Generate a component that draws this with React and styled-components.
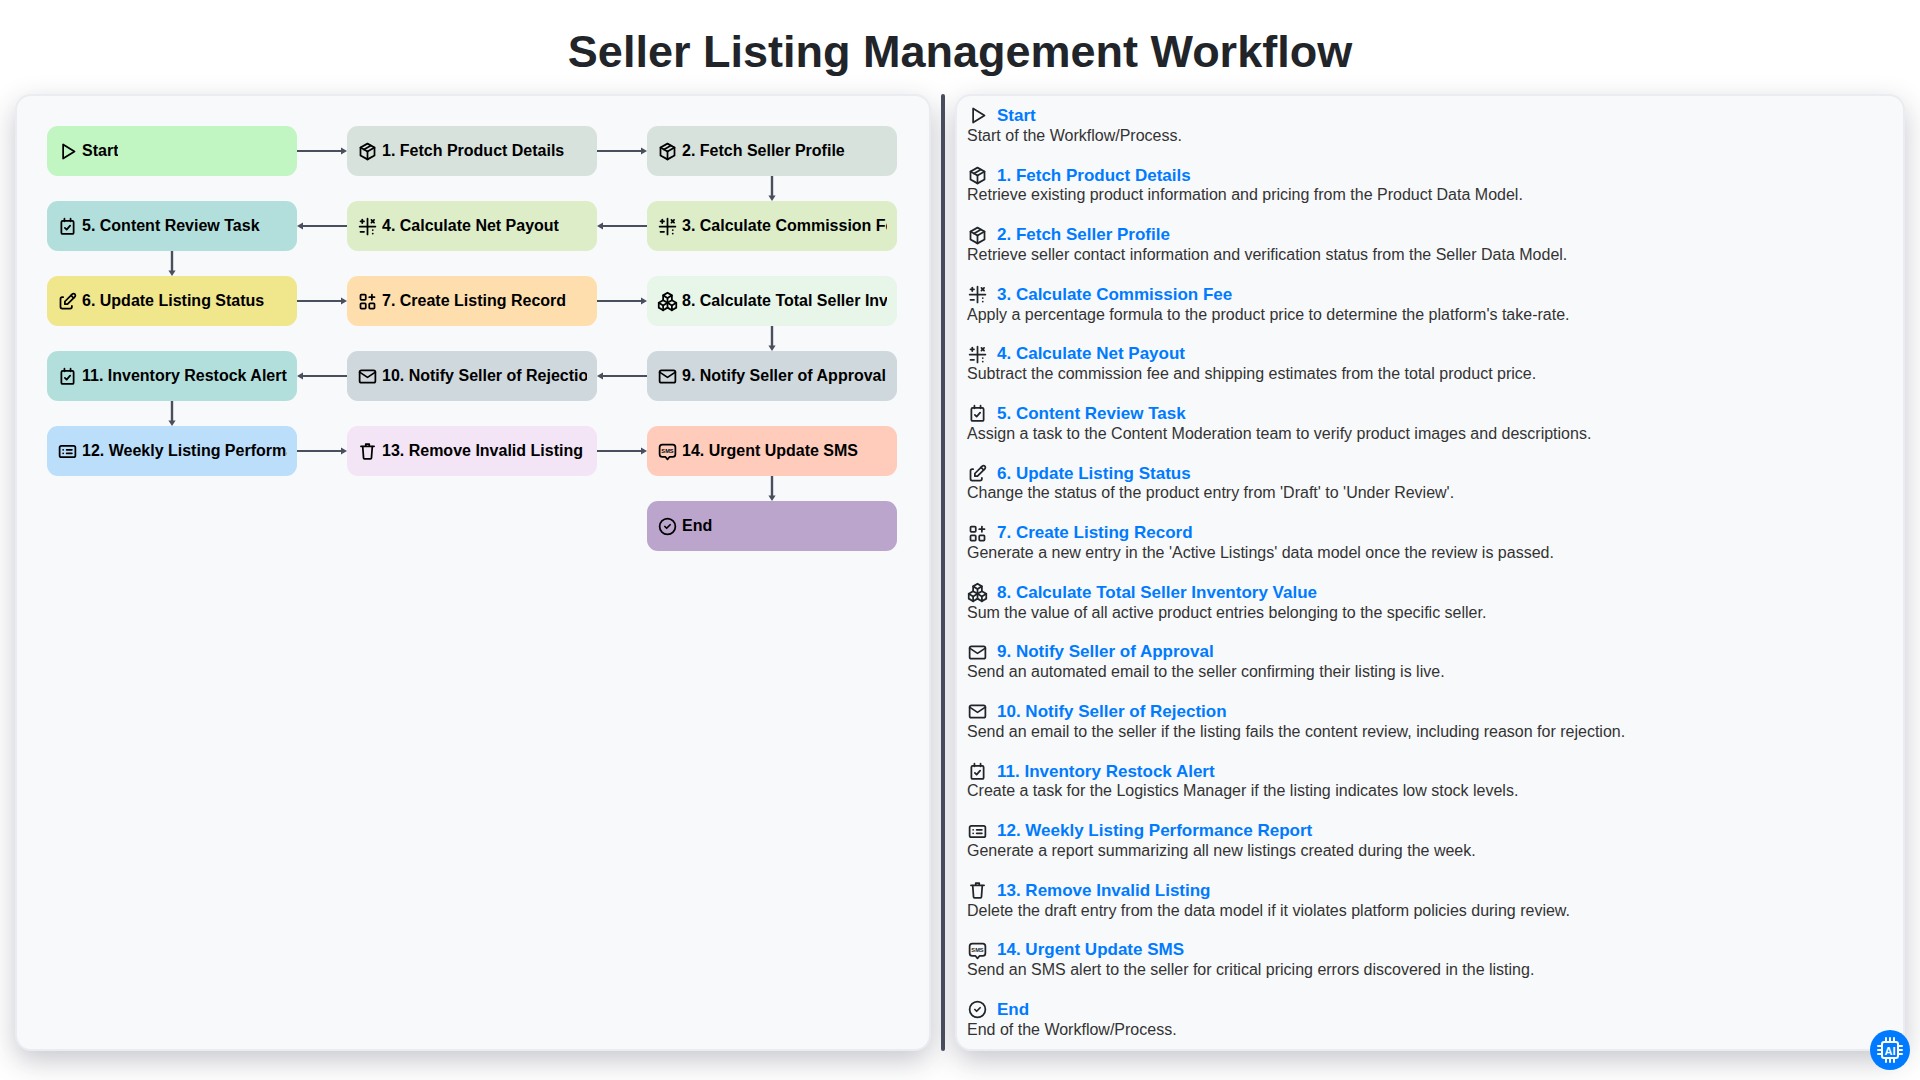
import React from "react";
import styled, { createGlobalStyle } from "styled-components";
import { TbPlayerPlay, TbPackage, TbMathSymbols, TbEdit, TbApps, TbPackages, TbMail, TbCircleCheck } from "react-icons/tb";

const Global = createGlobalStyle`
  html, body { margin: 0; padding: 0; background: #fff; }
  body { font-family: "Liberation Sans", Arial, sans-serif; overflow: hidden; }
`;

const Page = styled.div`
  width: 1920px; height: 1080px; display: flex; flex-direction: column; position: relative;
`;
const Title = styled.h1`
  margin: 0; height: 94px; display: flex; align-items: center; justify-content: center;
  font-size: 45px; font-weight: 700; color: #212529; padding-top: 10px; box-sizing: border-box;
`;
const Columns = styled.div`
  display: flex; height: 957px; padding: 0 15px;
`;
const Panel = styled.section`
  box-sizing: border-box; height: 100%; background: #f8f9fb; border: 2px solid #eaecf1; border-radius: 16px;
  box-shadow: 0 10px 28px rgba(40, 44, 60, 0.26);
`;
const FlowPanel = styled(Panel)`
  flex: 0 0 916px; padding: 30px; display: flex; align-items: flex-start;
`;
const Divider = styled.div`
  flex: 0 0 4px; margin: 0 10px; background: #4a4f60; border-radius: 2px;
`;
const ListPanel = styled(Panel)`
  flex: 1; padding: 9.2px 10px; display: flex; flex-direction: column; gap: 19.6px;
`;
const Grid = styled.div`
  display: grid; grid-template-columns: 250px 50px 250px 50px 250px;
`;
const Node = styled.div`
  box-sizing: border-box; height: 50px; padding: 0 10px 0 9.500px; border-radius: 11px; background: ${p => p.$bg};
  display: flex; align-items: center; gap: 4.500px;
  font-size: 16px; font-weight: 700; color: #000; white-space: nowrap;
  svg { flex: none; width: 21px; height: 21px; }
`;
const NodeLabel = styled.span`
  min-width: 0; overflow: hidden;
`;
const Cell = styled.div`
  height: ${p => (p.$gap ? "25px" : "50px")};
  display: flex; align-items: center; justify-content: center;
`;
const Item = styled.article`
  display: flex; flex-direction: column;
`;
const ItemHead = styled.div`
  display: flex; align-items: center; gap: 9.500px; height: 21.6px; margin-left: -0.5px;
  svg { flex: none; width: 21px; height: 21px; color: #212529; }
`;
const ItemTitle = styled.h3`
  margin: 0; font-size: 17px; font-weight: 700; color: #007bff;
`;
const ItemText = styled.p`
  margin: 0; font-size: 16px; color: #333; line-height: 18.4px;
`;
const AiBadge = styled.button`
  position: absolute; left: 1870px; top: 1030px; width: 40px; height: 40px; border: 0; padding: 0; border-radius: 50%;
  background: #007bff; color: #fff; display: flex; align-items: center; justify-content: center;
`;

const Svg = ({ children }) => (
  <svg viewBox="0 0 24 24" fill="none" stroke="currentColor" strokeWidth="2" strokeLinecap="round" strokeLinejoin="round">{children}</svg>
);
const TaskIcon = () => (
  <Svg><rect x="5" y="5.500" width="14" height="15" rx="1.500" /><path d="M8.500 3v3M15.500 3v3M9 13.500l2 2 4-4.500" /></Svg>
);
const ReportIcon = () => (
  <Svg><rect x="3" y="5.500" width="18" height="13" rx="2" /><path d="M7 10h.01M7 14h.01M11 10h6M11 14h6" /></Svg>
);
const TrashIcon = () => (
  <Svg><path d="M4.500 6h15M6.500 6l1 13.500a1 1 0 0 0 1 1h7a1 1 0 0 0 1-1l1-13.500M10 6V3.500h4V6" /></Svg>
);
const SmsIcon = () => (
  <Svg>
    <path d="M6 4h12a3 3 0 0 1 3 3v8a3 3 0 0 1-3 3h-3.500l-2.500 3-2.500-3H6a3 3 0 0 1-3-3V7a3 3 0 0 1 3-3z" />
    <text x="12" y="13.200" textAnchor="middle" fontSize="6.500" fontWeight="700" fontFamily="Liberation Sans" stroke="none" fill="currentColor">SMS</text>
  </Svg>
);
const AiIcon = () => (
  <svg width="30" height="30" viewBox="0 0 30 30" fill="none" stroke="#fff" strokeWidth="2" strokeLinecap="round">
    <rect x="7" y="7" width="16" height="16" rx="2" />
    <path d="M11 3v3M15 3v3M19 3v3M11 24v3M15 24v3M19 24v3M3 11h3M3 15h3M3 19h3M24 11h3M24 15h3M24 19h3" />
    <text x="15" y="19.500" textAnchor="middle" fontSize="11" fontWeight="700" fontFamily="Liberation Sans" stroke="none" fill="#fff">AI</text>
  </svg>
);

const Arrow = ({ dir }) => {
  if (dir === "down") {
    return (
      <svg width="10" height="25" viewBox="0 0 10 25" fill="#4a4f5e">
        <rect x="3.800" y="0" width="2.400" height="20" /><path d="M5 25 1.400 19.500h7.200z" />
      </svg>
    );
  }
  return (
    <svg width="50" height="10" viewBox="0 0 50 10" fill="#4a4f5e">
      {dir === "right"
        ? <><rect x="0" y="4" width="45" height="2" /><path d="M50 5 44 1.400v7.200z" /></>
        : <><rect x="5" y="4" width="45" height="2" /><path d="M0 5 6 1.400v7.200z" /></>}
    </svg>
  );
};

const steps = {
  start: { t: "Start", d: "Start of the Workflow/Process.", bg: "#c1f5c1", I: TbPlayerPlay },
  s1: { t: "1. Fetch Product Details", d: "Retrieve existing product information and pricing from the Product Data Model.", bg: "#d8e2dc", I: TbPackage },
  s2: { t: "2. Fetch Seller Profile", d: "Retrieve seller contact information and verification status from the Seller Data Model.", bg: "#d8e2dc", I: TbPackage },
  s3: { t: "3. Calculate Commission Fee", d: "Apply a percentage formula to the product price to determine the platform's take-rate.", bg: "#dcedc8", I: TbMathSymbols },
  s4: { t: "4. Calculate Net Payout", d: "Subtract the commission fee and shipping estimates from the total product price.", bg: "#dcedc8", I: TbMathSymbols },
  s5: { t: "5. Content Review Task", d: "Assign a task to the Content Moderation team to verify product images and descriptions.", bg: "#b2dfdb", I: TaskIcon },
  s6: { t: "6. Update Listing Status", d: "Change the status of the product entry from 'Draft' to 'Under Review'.", bg: "#f0e68c", I: TbEdit },
  s7: { t: "7. Create Listing Record", d: "Generate a new entry in the 'Active Listings' data model once the review is passed.", bg: "#ffdead", I: TbApps },
  s8: { t: "8. Calculate Total Seller Inventory Value", d: "Sum the value of all active product entries belonging to the specific seller.", bg: "#e8f5e9", I: TbPackages },
  s9: { t: "9. Notify Seller of Approval", d: "Send an automated email to the seller confirming their listing is live.", bg: "#cfd8dc", I: TbMail },
  s10: { t: "10. Notify Seller of Rejection", d: "Send an email to the seller if the listing fails the content review, including reason for rejection.", bg: "#cfd8dc", I: TbMail },
  s11: { t: "11. Inventory Restock Alert", d: "Create a task for the Logistics Manager if the listing indicates low stock levels.", bg: "#b2dfdb", I: TaskIcon },
  s12: { t: "12. Weekly Listing Performance Report", d: "Generate a report summarizing all new listings created during the week.", bg: "#bbdefb", I: ReportIcon },
  s13: { t: "13. Remove Invalid Listing", d: "Delete the draft entry from the data model if it violates platform policies during review.", bg: "#f3e5f5", I: TrashIcon },
  s14: { t: "14. Urgent Update SMS", d: "Send an SMS alert to the seller for critical pricing errors discovered in the listing.", bg: "#ffccbc", I: SmsIcon },
  end: { t: "End", d: "End of the Workflow/Process.", bg: "#bca5cd", I: TbCircleCheck },
};
const order = ["start", "s1", "s2", "s3", "s4", "s5", "s6", "s7", "s8", "s9", "s10", "s11", "s12", "s13", "s14", "end"];

const layout = [
  ["start", "right", "s1", "right", "s2"],
  [null, null, null, null, "down"],
  ["s5", "left", "s4", "left", "s3"],
  ["down", null, null, null, null],
  ["s6", "right", "s7", "right", "s8"],
  [null, null, null, null, "down"],
  ["s11", "left", "s10", "left", "s9"],
  ["down", null, null, null, null],
  ["s12", "right", "s13", "right", "s14"],
  [null, null, null, null, "down"],
  [null, null, null, null, "end"],
];

export default function App() {
  return (
    <Page>
      <Global />
      <Title>Seller Listing Management Workflow</Title>
      <Columns>
        <FlowPanel>
          <Grid>
            {layout.flatMap((row, r) =>
              row.map((c, i) => {
                const key = `${r}-${i}`;
                const gap = r % 2 === 1;
                if (c && steps[c]) {
                  const { t, bg, I } = steps[c];
                  return <Node key={key} $bg={bg}><I /><NodeLabel>{t}</NodeLabel></Node>;
                }
                return <Cell key={key} $gap={gap}>{c && <Arrow dir={c} />}</Cell>;
              })
            )}
          </Grid>
        </FlowPanel>
        <Divider />
        <ListPanel>
          {order.map(k => {
            const { t, d, I } = steps[k];
            return (
              <Item key={k}>
                <ItemHead><I /><ItemTitle>{t}</ItemTitle></ItemHead>
                <ItemText>{d}</ItemText>
              </Item>
            );
          })}
        </ListPanel>
      </Columns>
      <AiBadge aria-label="AI"><AiIcon /></AiBadge>
    </Page>
  );
}
